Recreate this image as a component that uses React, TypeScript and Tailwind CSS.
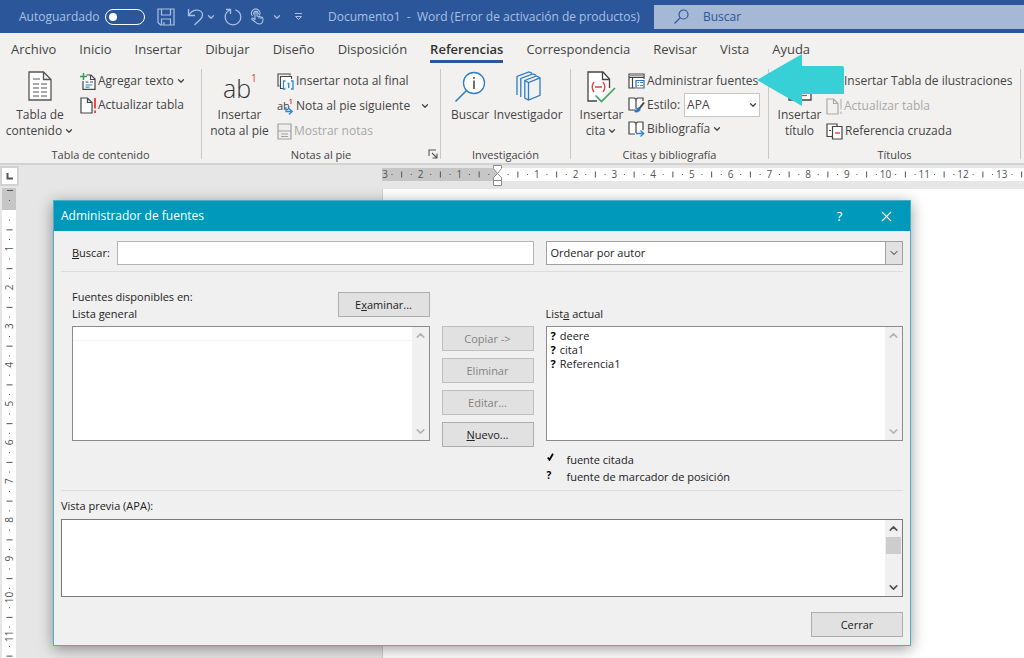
import type { ReactNode } from 'react'
import { ChevronDown, ChevronUp, X } from 'lucide-react'

const TABS = [
  'Archivo',
  'Inicio',
  'Insertar',
  'Dibujar',
  'Diseño',
  'Disposición',
  'Referencias',
  'Correspondencia',
  'Revisar',
  'Vista',
  'Ayuda',
]

const SOURCES = ['deere', 'cita1', 'Referencia1']

// ruler: distance between two numbers
const UNIT = 38.75

/* ---------- icons ---------- */

const SaveIcon = () => (
  <svg width="18" height="18" viewBox="0 0 18 18" fill="none" stroke="#a9c0e2" strokeWidth="1.2">
    <path d="M1 1h16v16H3.5L1 14.5zM4.5 1v6h9V1M4.500 17v-6h9v6M7 17v-3" />
  </svg>
)

const UndoIcon = () => (
  <svg width="17" height="18" viewBox="0 0 17 18" fill="none" stroke="#a9c0e2" strokeWidth="1.3">
    <path d="M1.500 1v6.500H8M1.700 7.300C4 3.500 7 2.200 10 2.200c3.200 0 5.500 2 5.500 4.800 0 2-1 3.200-2.500 4.700L7.500 17" />
  </svg>
)

const RedoIcon = () => (
  <svg width="18" height="18" viewBox="0 0 18 18" fill="none" stroke="#a9c0e2" strokeWidth="1.3">
    <path d="M2 1.500h4.500V6M6.300 2C3.300 3 1.200 5.800 1.200 9.200c0 4.300 3.500 7.600 7.800 7.600s7.800-3.300 7.800-7.600c0-3.500-2.200-6.300-5.400-7.300" />
  </svg>
)

const TouchIcon = () => (
  <svg width="14" height="17" viewBox="0 0 14 17" fill="none" stroke="#a9c0e2" strokeWidth="1.100">
    <path d="M2.500 8A4.200 4.200 0 1 1 9.300 7.500M4 6.500A2.200 2.200 0 1 1 7.800 6.500" />
    <path d="M5 12V4.500a1 1 0 0 1 2 0V8l4.500 1c1 .2 1.500.8 1.500 1.800 0 2.800-1 5.200-3.500 5.200-2 0-3-.5-4.200-2L2 11.500c-.7-1 .5-2 1.500-1.200L5 12M9 8.500v2M11 9v2" />
  </svg>
)

const TocIcon = () => (
  <svg width="24" height="30" viewBox="0 0 24 30" fill="none" stroke="#555" strokeWidth="1.300">
    <path d="M1 1h14.500L23 8.500V29H1zM15.500 1v7.500H23" fill="#fff" />
    <path d="M5 8h7M5 13h6M13 13h6M5 17h6M13 17h6M5 21h6M13 21h6M5 25h6M13 25h6" strokeWidth="1.200" />
  </svg>
)

const AddTextIcon = () => (
  <svg width="16" height="17" viewBox="0 0 16 17" fill="none" stroke="#444" strokeWidth="1.200">
    <path d="M6.500 2H11l4 4v10.400H3V8" fill="#fff" />
    <path d="M10.500 2v4.500H15M5.500 9h3M10 9h3" />
    <path d="M5.500 12h7M5.500 14.200h4" stroke="#2b88d8" />
    <path d="M3.500 0v7M0 3.500h7" stroke="#2f9e4f" strokeWidth="1.500" />
  </svg>
)

const UpdateIcon = ({ muted = false }: { muted?: boolean }) => (
  <svg width="16" height="17" viewBox="0 0 16 17" fill="none" stroke={muted ? '#aaa' : '#444'} strokeWidth="1.200">
    <path d="M1 1h6.500L12 5.500V16H1zM7.500 1v4.500H12" fill={muted ? '#f1f1f1' : '#fff'} />
    <path d="M15 1v10.500M15 13.500v2.500" stroke={muted ? '#aaa' : '#e8383f'} strokeWidth={muted ? '1' : '1.800'} />
  </svg>
)

const FootnoteIcon = () => (
  <svg width="34" height="36" viewBox="0 0 34 36" className="font-['Open_Sans',sans-serif]">
    <text x="0" y="27" fontSize="25" fontWeight="300" fill="#333">ab</text>
    <text x="28" y="11" fontSize="10" fill="#e8383f">1</text>
  </svg>
)

const EndnoteIcon = () => (
  <svg width="17" height="17" viewBox="0 0 17 17" fill="none" stroke="#444" strokeWidth="1.100">
    <path d="M2.500 13H1V1h12v1.500" />
    <path d="M6 15.500H3.500V3.500h11V6" fill="#fff" />
    <path d="M8.500 8h-2v8h2M14 8h2v8h-2M10.500 10.500h1.200V15" stroke="#2b88d8" strokeWidth="1.300" />
  </svg>
)

const NextNoteIcon = () => (
  <svg width="17" height="17" viewBox="0 0 17 17" className="font-['Open_Sans',sans-serif]">
    <text x="0" y="12" fontSize="11" fill="#444">ab</text>
    <path d="M12.500 2.200L14 1v5" fill="none" stroke="#e8383f" />
    <path d="M9 9v4.500h6M12 10.500l3.200 3-3.200 3" fill="none" stroke="#2b88d8" strokeWidth="1.300" />
  </svg>
)

const ShowNotesIcon = () => (
  <svg width="15" height="17" viewBox="0 0 15 17" fill="none" stroke="#a0a0a0" strokeWidth="1.200">
    <path d="M1 1h13v15H1zM1 8h13" fill="#eee" />
    <path d="M4 11h7M4 13.500h7" />
  </svg>
)

const SmartLookupIcon = () => (
  <svg width="32" height="32" viewBox="0 0 32 32" fill="none">
    <circle cx="20" cy="12" r="10.500" fill="#fff" stroke="#2f7ec2" strokeWidth="1.300" />
    <path d="M12.500 19.500L1.500 30.500" stroke="#2f7ec2" strokeWidth="1.600" />
    <path d="M20 9.500v8.500M20 6v1.800" stroke="#333" strokeWidth="1.400" />
  </svg>
)

const ResearcherIcon = () => (
  <svg width="25" height="30" viewBox="0 0 25 30" fill="none" stroke="#2f7ec2" strokeWidth="1.300">
    <path d="M1 24V5.500L13 1l3 1.200M4.800 26V7.500L17 3l3 1.200" />
    <path d="M8.800 9.500L20.500 5 24 6.800v17.500L12.500 29l-3.700-2zM8.800 9.500l3.700 2L24 6.800M12.500 11.500V29" />
  </svg>
)

const CitationIcon = () => (
  <svg width="29" height="32" viewBox="0 0 29 32" fill="none" stroke="#444" strokeWidth="1.300">
    <path d="M22.500 17V8L16 1H1v29h9" fill="#fff" />
    <path d="M15.500 1v7.500h7" />
    <path d="M7 11c-2.200 3-2.200 7 0 10M16 11c2.200 3 2.200 7 0 10M8 16h7" stroke="#e8383f" />
    <path d="M8.500 24.500l6 6L28 17" stroke="#3fa35f" strokeWidth="1.600" />
  </svg>
)

const ManageIcon = () => (
  <svg width="17" height="16" viewBox="0 0 17 16" fill="none" stroke="#444" strokeWidth="1.200">
    <path d="M7 15H1V1h15v5M1 4.300h15M4.500 4.300V15" fill="#fff" />
    <path d="M1 2.500h15" stroke="#999" strokeWidth="1" />
    <path d="M8 7.500h8V15H8z" fill="#fff" stroke="#2f6fb0" />
    <path d="M9.500 9.500h1.500M12 9.500h3M9.500 12.500h1.500M12 12.500h3" stroke="#2b88d8" />
  </svg>
)

const StyleIcon = () => (
  <svg width="17" height="16" viewBox="0 0 17 16" fill="none" stroke="#444" strokeWidth="1.200">
    <path d="M8 14.500L7 13H1V1h5.500L8 2.500 9.500 1H15v3M8 2.500V12" fill="#fff" />
    <path d="M16 5.500L11 12" strokeWidth="2" />
    <path d="M10.500 10.500c-2 .5-1.800 3-4 4.500 3 .6 6-.5 5.700-3z" fill="#2b78c2" stroke="#2b78c2" strokeWidth="0.500" />
  </svg>
)

const BiblioIcon = () => (
  <svg width="17" height="16" viewBox="0 0 17 16" fill="none" stroke="#444" strokeWidth="1.200">
    <path d="M7 13H1V1h5.500L8 2.500 9.500 1H15v8M8 2.500V12" fill="#fff" />
    <path d="M8 12.500h7.500M12.500 9.500l3.200 3-3.200 3" stroke="#2b88d8" strokeWidth="1.300" />
  </svg>
)

const CaptionIcon = () => (
  <svg width="24" height="30" viewBox="0 0 24 30" fill="none" stroke="#444" strokeWidth="1.300">
    <path d="M1 1h22v28H1z" fill="#fff" />
    <path d="M13 24.500h6" stroke="#e8383f" />
  </svg>
)

const FiguresIcon = () => (
  <svg width="16" height="16" viewBox="0 0 16 16" fill="none" stroke="#444" strokeWidth="1.200">
    <path d="M1 1h14v14H1zM4 5h8M4 8h8M4 11h8" fill="#fff" />
  </svg>
)

const CrossRefIcon = () => (
  <svg width="17" height="17" viewBox="0 0 17 17" fill="none" stroke="#444" strokeWidth="1.200">
    <path d="M6 13.500H1V1h10v2.500" fill="#fff" />
    <path d="M3 7.500h2" />
    <path d="M6.500 3.500H16V16H6.500z" fill="#fff" />
    <path d="M9 10h5" stroke="#e8383f" strokeWidth="1.400" />
  </svg>
)

const LauncherIcon = () => (
  <svg width="10" height="10" viewBox="0 0 10 10" fill="none" stroke="#555" strokeWidth="1.100">
    <path d="M1 7V1h7M4 4l4.500 4.500M9 4.500V9H4.500" />
  </svg>
)

const Caret = () => <ChevronDown size={10} strokeWidth={3} className="shrink-0" />

/* ---------- ribbon ---------- */

function Group({
  label,
  className,
  children,
  launcher = false,
}: {
  label: string
  className: string
  children: ReactNode
  launcher?: boolean
}) {
  return (
    <section className={`relative flex h-[90px] shrink-0 flex-col border-r border-[#c8c8c8] ${className}`}>
      <div className="flex flex-1 items-start">{children}</div>
      <div className="h-2 text-center text-[11px] leading-2 text-[#444]">{label}</div>
      {launcher && (
        <button aria-label={`Opciones de ${label}`} className="absolute right-[2px] bottom-0">
          <LauncherIcon />
        </button>
      )}
    </section>
  )
}

function BigButton({
  icon,
  lines,
  caret = false,
  className = '',
}: {
  icon: ReactNode
  lines: string[]
  caret?: boolean
  className?: string
}) {
  return (
    <button className={`flex shrink-0 flex-col items-center pt-[2px] text-[12px] leading-4 whitespace-nowrap ${className}`}>
      <span className="flex h-9 items-start">{icon}</span>
      {lines.map((line, i) => (
        <span key={line} className="flex items-center gap-[2px]">
          {line}
          {caret && i === lines.length - 1 && <Caret />}
        </span>
      ))}
    </button>
  )
}

function SmallButton({
  icon,
  children,
  caret = false,
  disabled = false,
}: {
  icon: ReactNode
  children: ReactNode
  caret?: boolean
  disabled?: boolean
}) {
  return (
    <button
      disabled={disabled}
      className="flex h-6 items-center gap-[2px] text-[12px] whitespace-nowrap disabled:text-[#a8a8a8]"
    >
      {icon}
      <span>{children}</span>
      {caret && <Caret />}
    </button>
  )
}

function TitleBar() {
  return (
    <header className="flex h-[33px] items-center bg-[#2b579a] text-[12px] text-[#a9c0e2]">
      <label htmlFor="autosave" className="ml-[19px] w-20">
        Autoguardado
      </label>
      <span className="relative ml-[6px] h-4 w-10">
        <input
          id="autosave"
          type="checkbox"
          role="switch"
          className="h-4 w-10 appearance-none rounded-full border border-white"
        />
        <span className="pointer-events-none absolute top-1 left-1 h-2 w-2 rounded-full bg-white" />
      </span>
      <div className="ml-3 flex w-[171px] items-center">
        <button aria-label="Guardar"><SaveIcon /></button>
        <button aria-label="Deshacer" className="ml-3"><UndoIcon /></button>
        <button aria-label="Más acciones" className="ml-[2px]"><Caret /></button>
        <button aria-label="Rehacer" className="ml-2"><RedoIcon /></button>
        <button aria-label="Modo táctil" className="ml-2"><TouchIcon /></button>
        <button aria-label="Opciones táctiles" className="ml-2"><Caret /></button>
        <button aria-label="Personalizar" className="ml-3">
          <svg width="9" height="9" viewBox="0 0 9 9" fill="none" stroke="#a9c0e2">
            <path d="M1 1.500h7M1.500 4.500h6L4.500 7.500z" />
          </svg>
        </button>
      </div>
      <h1 className="w-[326px] text-[12px] whitespace-pre">Documento1  -  Word (Error de activación de productos)</h1>
      <div className="flex h-6 flex-1 items-center bg-[#a5b8d5] pl-5 text-[#2b579a]">
        <svg width="15" height="15" viewBox="0 0 15 15" fill="none" stroke="#2b579a" strokeWidth="1.200">
          <circle cx="9.500" cy="5.500" r="4.500" />
          <path d="M6.300 8.700L.5 14.500" />
        </svg>
        <input
          aria-label="Buscar"
          placeholder="Buscar"
          className="ml-[14px] min-w-0 flex-1 bg-transparent placeholder:text-[#2b579a]"
        />
      </div>
    </header>
  )
}

function Ribbon() {
  return (
    <div className="border-b-2 border-[#d2d2d2] bg-[#f2f1f0] text-[#444]">
      <nav className="flex h-9 items-start gap-[23px] px-[11px] pt-[6px] text-[13px] leading-5">
        {TABS.map((tab) => (
          <a
            key={tab}
            href="#"
            className={
              tab === 'Referencias'
                ? 'h-6 border-b-[3px] border-[#2b579a] font-semibold text-[#333]'
                : 'h-6'
            }
          >
            {tab}
          </a>
        ))}
      </nav>

      <div className="flex h-[94px] items-start">
        <Group label="Tabla de contenido" className="w-[202px]">
          <BigButton icon={<TocIcon />} lines={['Tabla de', 'contenido']} caret className="w-20" />
          <div>
            <SmallButton icon={<AddTextIcon />} caret>Agregar texto</SmallButton>
            <SmallButton icon={<UpdateIcon />}>Actualizar tabla</SmallButton>
          </div>
        </Group>

        <Group label="Notas al pie" className="w-[239px]" launcher>
          <BigButton icon={<FootnoteIcon />} lines={['Insertar', 'nota al pie']} className="w-[75px]" />
          <div className="flex-1 space-y-px">
            <SmallButton icon={<EndnoteIcon />}>Insertar nota al final</SmallButton>
            <SmallButton icon={<NextNoteIcon />} caret>
              <span className="mr-2">Nota al pie siguiente</span>
            </SmallButton>
            <SmallButton icon={<ShowNotesIcon />} disabled>Mostrar notas</SmallButton>
          </div>
        </Group>

        <Group label="Investigación" className="w-[130px]">
          <BigButton icon={<SmartLookupIcon />} lines={['Buscar']} className="w-[58px]" />
          <BigButton icon={<ResearcherIcon />} lines={['Investigador']} className="w-[58px]" />
        </Group>

        <Group label="Citas y bibliografía" className="w-[198px]">
          <BigButton icon={<CitationIcon />} lines={['Insertar', 'cita']} caret className="w-[57px] pl-1" />
          <div>
            <SmallButton icon={<ManageIcon />}>Administrar fuentes</SmallButton>
            <div className="flex h-6 items-center gap-[2px] text-[12px]">
              <StyleIcon />
              <label htmlFor="style">Estilo:</label>
              <span className="relative ml-[2px]">
                <select
                  id="style"
                  className="h-6 w-[76px] appearance-none border border-[#c6c6c6] bg-white pl-[2px]"
                >
                  <option>APA</option>
                </select>
                <span className="pointer-events-none absolute top-[7px] right-[2px]"><Caret /></span>
              </span>
            </div>
            <SmallButton icon={<BiblioIcon />} caret>Bibliografía</SmallButton>
          </div>
        </Group>

        <Group label="Títulos" className="w-[252px]">
          <BigButton icon={<CaptionIcon />} lines={['Insertar', 'título']} className="w-[57px] pl-1" />
          <div className="space-y-px">
            <SmallButton icon={<FiguresIcon />}>Insertar Tabla de ilustraciones</SmallButton>
            <SmallButton icon={<UpdateIcon muted />} disabled>Actualizar tabla</SmallButton>
            <SmallButton icon={<CrossRefIcon />}>Referencia cruzada</SmallButton>
          </div>
          {/* callout arrow pointing at "Administrar fuentes" */}
          <svg
            className="absolute -top-4 -left-3"
            width="88"
            height="54"
            viewBox="0 0 88 54"
            fill="#36d0d6"
            aria-hidden
          >
            <path d="M0 27L45 1v12h40a2 2 0 0 1 2 2v26H45v12z" />
          </svg>
        </Group>
      </div>
    </div>
  )
}

/* ---------- rulers ---------- */

// three marks between a number and the next one
const marks = [
  { at: 0.25, half: 0.5 },
  { at: 0.5, half: 3 },
  { at: 0.75, half: 0.5 },
]

function HorizontalRuler() {
  const zero = 116
  return (
    <svg height="24" className="block w-full font-['Open_Sans',sans-serif]" fill="#555" fontSize="10" textAnchor="middle">
      <rect x="0" y="3" width={zero} height="13" fill="#c6c6c6" />
      <rect x={zero} y="3" width="100%" height="13" fill="#fff" />
      {Array.from({ length: 17 }, (_, i) => i - 3).map((n) => (
        <g key={n}>
          {n !== 0 && <text x={Math.max(zero + n * UNIT, 3)} y="13">{Math.abs(n)}</text>}
          {marks.map((m) => (
            <rect key={m.at} x={zero + (n + m.at) * UNIT} y={9.5 - m.half} width="1" height={m.half * 2} />
          ))}
        </g>
      ))}
      <g fill="#fff" stroke="#888">
        <path d="M111.500 .5h8v3l-4 5-4-5zM115.500 8.500l4 4v3h-8v-3zM111.500 15.500h8v5h-8z" />
      </g>
    </svg>
  )
}

function VerticalRuler() {
  const zero = 22
  return (
    <svg width="14" height="100%" className="block font-['Open_Sans',sans-serif]" fill="#555" fontSize="10" textAnchor="middle">
      <rect width="14" height="100%" fill="#fff" />
      <rect width="14" height={zero} fill="#c6c6c6" />
      <rect x="5" y="2" width="6" height="1" />
      <rect x="7" y="12" width="1" height="1" />
      {Array.from({ length: 12 }, (_, n) => (
        <g key={n}>
          {n > 0 && <text transform={`translate(11 ${zero + n * UNIT}) rotate(-90)`}>{n}</text>}
          {marks.map((m) => (
            <rect key={m.at} x={7.5 - m.half} y={zero + (n + m.at) * UNIT} width={m.half * 2} height="1" />
          ))}
        </g>
      ))}
    </svg>
  )
}

/* ---------- dialog ---------- */

function DialogButton({ children, disabled = false }: { children: ReactNode; disabled?: boolean }) {
  return (
    <button
      disabled={disabled}
      className="h-[25px] w-[92px] shrink-0 border border-[#adadad] bg-[#e1e1e1] disabled:border-[#bfbfbf] disabled:text-[#838383]"
    >
      {children}
    </button>
  )
}

function ScrollBar({ active = false }: { active?: boolean }) {
  return (
    <div
      className={`flex w-[17px] shrink-0 flex-col items-center bg-[#f0f0f0] ${active ? 'text-[#505050]' : 'text-[#b5b5b5]'}`}
    >
      <button aria-label="Subir" className="flex h-[17px] items-center"><ChevronUp size={13} strokeWidth={3} /></button>
      {active && <div className="h-[17px] w-[15px] bg-[#cdcdcd]" />}
      <button aria-label="Bajar" className="mt-auto flex h-[17px] items-center"><ChevronDown size={13} strokeWidth={3} /></button>
    </div>
  )
}

function SourceManager() {
  return (
    <div
      role="dialog"
      aria-labelledby="dialog-title"
      className="absolute top-[200px] left-[53px] w-[858px] border border-[#4aaec4] bg-[#f0f0f0] text-[11px] leading-[14px] text-[#222] shadow-[0_3px_14px_rgba(0,0,0,0.4)]"
    >
      <div className="flex h-[30px] items-center bg-[#0099bc] pl-[7px] text-white">
        <h2 id="dialog-title" className="flex-1 text-[12px]">Administrador de fuentes</h2>
        <button aria-label="Ayuda" className="w-[47px] text-[13px]">?</button>
        <button aria-label="Cerrar ventana" className="flex w-[47px] justify-center">
          <X size={17} strokeWidth={1.500} />
        </button>
      </div>

      <div className="px-[7px] pb-2">
        <div className="grid grid-cols-[1fr_92px_1fr] gap-3 border-b border-[#dcdcdc] py-[6px] pt-[10px] pl-[11px]">
          <div className="col-span-2 flex items-center">
            <label htmlFor="search" className="w-[45px] shrink-0"><u>B</u>uscar:</label>
            <input id="search" className="h-6 min-w-0 flex-1 border border-[#b4b4b4] bg-white px-1" />
          </div>
          <div className="relative">
            <select
              aria-label="Ordenar"
              className="h-6 w-full appearance-none border border-[#a0a0a0] bg-white pl-1"
            >
              <option>Ordenar por autor</option>
            </select>
            <span className="pointer-events-none absolute top-0 right-0 flex h-6 w-[18px] items-center justify-center border border-[#a0a0a0] bg-[#e1e1e1]">
              <ChevronDown size={12} strokeWidth={2} />
            </span>
          </div>
        </div>

        <div className="grid grid-cols-[1fr_92px_1fr] gap-x-3 border-b border-[#dcdcdc] pt-4 pb-[5px] pl-[11px]">
          <div className="flex h-[38px] items-start justify-between">
            <p className="leading-[17px]">
              Fuentes disponibles en:
              <br />
              Lista general
            </p>
            <div className="pt-1">
              <DialogButton>E<u>x</u>aminar...</DialogButton>
            </div>
          </div>
          <p className="col-start-3 pt-[17px] leading-[17px]">List<u>a</u> actual</p>

          <div className="flex h-[115px] justify-between border border-[#8c8c8c] bg-white">
            <ul aria-label="Lista general" className="flex-1">
              <li className="h-[14px] border-b border-[#f5f5f5]" />
            </ul>
            <ScrollBar />
          </div>
          <div className="flex flex-col gap-[7px]">
            <DialogButton disabled>Copiar -&gt;</DialogButton>
            <DialogButton disabled>Eliminar</DialogButton>
            <DialogButton disabled>Editar...</DialogButton>
            <DialogButton><u>N</u>uevo...</DialogButton>
          </div>
          <div>
            <div className="flex h-[115px] justify-between border border-[#8c8c8c] bg-white">
              <ul aria-label="Lista actual" className="flex-1 pt-[2px] pl-1">
                {SOURCES.map((name) => (
                  <li key={name} className="flex gap-1">
                    <span className="font-bold text-black">?</span>
                    {name}
                  </li>
                ))}
              </ul>
              <ScrollBar />
            </div>
            <dl className="mt-[10px] grid grid-cols-[21px_1fr] leading-[17px]">
              <dt className="pt-[2px] pl-px">
                <svg width="7" height="8" viewBox="0 0 7 8" fill="none" stroke="#000" strokeWidth="1.800">
                  <path d="M.8 4.500L2.500 6.800 6 .8" />
                </svg>
              </dt>
              <dd>fuente citada</dd>
              <dt className="pl-px text-[10px] leading-[14px] font-bold text-black">?</dt>
              <dd>fuente de marcador de posición</dd>
            </dl>
          </div>
        </div>

        <p className="pt-2 pb-[6px]">Vista previa (APA):</p>
        <div className="flex h-[78px] justify-end border border-[#7a7a7a] bg-white">
          <ScrollBar active />
        </div>
        <div className="flex justify-end pt-[15px]">
          <DialogButton>Cerrar</DialogButton>
        </div>
      </div>
    </div>
  )
}

export default function App() {
  return (
    <div className="relative flex h-screen flex-col overflow-hidden bg-[#e6e6e6] font-['Open_Sans','Noto_Sans',sans-serif]">
      <TitleBar />
      <Ribbon />
      <main className="flex min-h-0 flex-1">
        <div className="flex flex-col items-start pt-px">
          <button
            aria-label="Tipo de tabulación"
            className="mb-[2px] flex h-5 w-[19px] items-center justify-center border-2 border-[#d2d2d2] bg-white"
          >
            <svg width="7" height="7" viewBox="0 0 7 7" fill="none" stroke="#555" strokeWidth="2">
              <path d="M1.500 0v5.500H7" />
            </svg>
          </button>
          <div className="ml-[2px] min-h-0 flex-1">
            <VerticalRuler />
          </div>
        </div>
        <div className="ml-[363px] flex min-w-0 flex-1 flex-col">
          <HorizontalRuler />
          <div className="flex-1 border-l border-[#d0d0d0] bg-white" />
        </div>
      </main>
      <SourceManager />
    </div>
  )
}
